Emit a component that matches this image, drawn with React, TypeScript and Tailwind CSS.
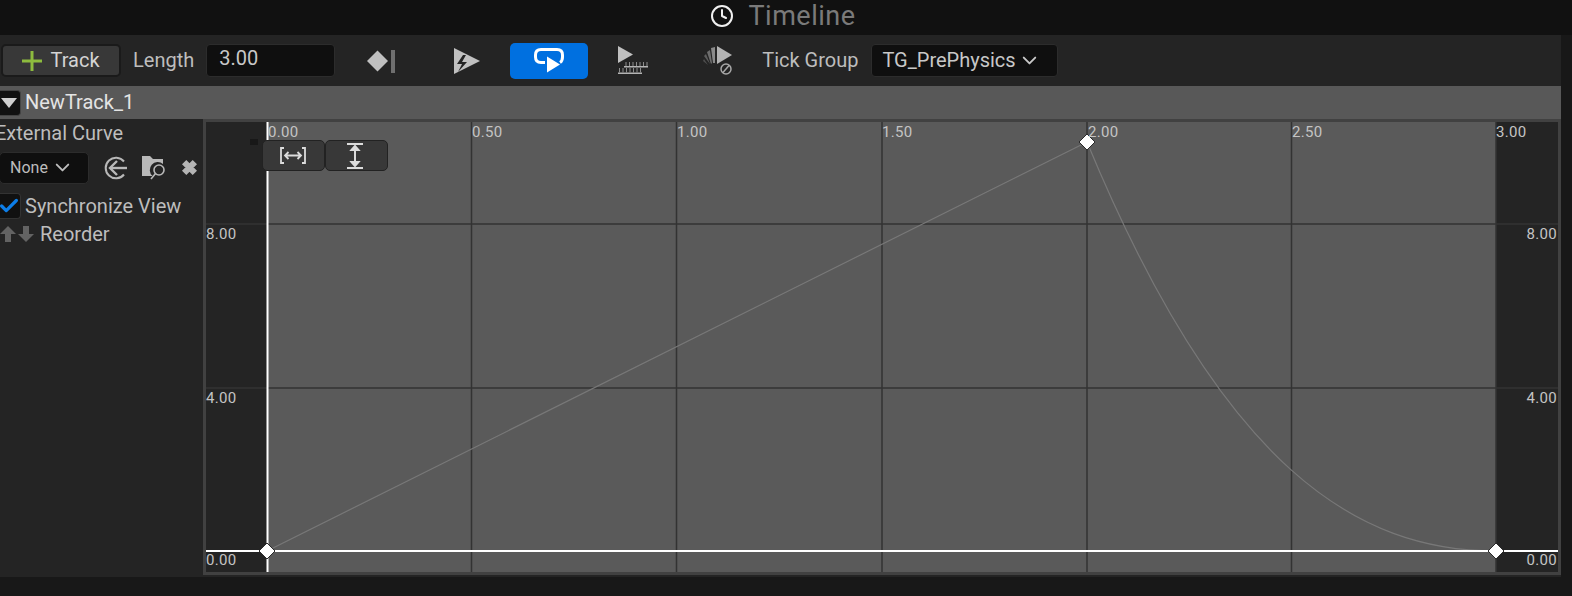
import { Check, ChevronDown, Clock } from "lucide-react";

const xLabels = [
  { text: "0.00", cls: "left-[62px]" },
  { text: "0.50", cls: "left-[266px]" },
  { text: "1.00", cls: "left-[471px]" },
  { text: "1.50", cls: "left-[676px]" },
  { text: "2.00", cls: "left-[882px]" },
  { text: "2.50", cls: "left-[1086px]" },
  { text: "3.00", cls: "left-[1290px]" },
];

const yLabels = [
  { text: "8.00", cls: "top-[103px]" },
  { text: "4.00", cls: "top-[267px]" },
  { text: "0.00", cls: "top-[429px]" },
];

function CurveLines() {
  // chart origin is 206,122 in the page
  return (
    <svg className="absolute inset-0" width="1352" height="450" viewBox="0 0 1352 450">
      <rect x="0" y="0" width="61" height="450" fill="#242424" />
      <rect x="1290" y="0" width="62" height="450" fill="#242424" />
      <g stroke="#333333" strokeWidth="1.5">
        <line x1="265.5" y1="0" x2="265.5" y2="450" />
        <line x1="470.5" y1="0" x2="470.5" y2="450" />
        <line x1="676" y1="0" x2="676" y2="450" />
        <line x1="881" y1="0" x2="881" y2="450" />
        <line x1="1085.5" y1="0" x2="1085.5" y2="450" />
        <line x1="1290" y1="0" x2="1290" y2="450" />
        <line x1="0" y1="102" x2="1352" y2="102" />
        <line x1="0" y1="266" x2="1352" y2="266" />
      </g>
      <path d="M61 429 L881 20 C 1017 349 1153 429 1290 429" fill="none" stroke="#787878" strokeWidth="1.2" />
      <line x1="61.5" y1="0" x2="61.5" y2="450" stroke="#ffffff" strokeWidth="2" />
      <line x1="0" y1="429" x2="1352" y2="429" stroke="#ffffff" strokeWidth="2" />
      <g fill="#ffffff" stroke="#2a2a2a" strokeWidth="1">
        <path d="M61 421 L69 429 L61 437 L53 429 Z" />
        <path d="M881 12 L889 20 L881 28 L873 20 Z" />
        <path d="M1290 421 L1298 429 L1290 437 L1282 429 Z" />
      </g>
      <rect x="44" y="17" width="8" height="6" fill="#181818" />
    </svg>
  );
}

function KeyIcon() {
  return (
    <svg width="30" height="26" viewBox="0 0 30 26">
      <path d="M1 13 L11.5 2.5 L22 13 L11.5 23.5 Z" fill="#c0c0c0" />
      <rect x="25" y="2" width="4" height="23" fill="#6f6f6f" />
    </svg>
  );
}

function AutoPlayIcon() {
  return (
    <svg width="28" height="28" viewBox="0 0 28 28">
      <path d="M1 1 L27 14 L1 27 Z" fill="#c0c0c0" />
      <path d="M10 8 L4 17 L9 17 L5 25 L14 15 L9 15 L13 8 Z" fill="#242424" />
    </svg>
  );
}

function LoopIcon() {
  return (
    <svg width="30" height="25" viewBox="0 0 30 25">
      <path
        d="M11 14.5 H7 Q1.5 14.5 1.5 9 V7 Q1.5 1.5 7 1.5 H23 Q28.5 1.5 28.5 7 V9 Q28.5 13 26 14.5"
        fill="none"
        stroke="#ffffff"
        strokeWidth="3"
      />
      <path d="M13 8.5 L26 16.5 L13 24.5 Z" fill="#ffffff" />
    </svg>
  );
}

function UseLastKeyIcon() {
  return (
    <svg width="31" height="29" viewBox="0 0 31 29">
      <path d="M0 0 L15 8.5 L0 17 Z" fill="#c0c0c0" />
      <rect x="6" y="20" width="24" height="1.5" fill="#b4b4b4" />
      <rect x="0" y="26.5" width="24" height="1.5" fill="#b4b4b4" />
      <g stroke="#8c8c8c" strokeWidth="1">
        <path d="M8 16 V20 M11.5 16 V20 M15 16 V20 M18.5 16 V20 M22 16 V20 M25.5 16 V20 M29 16 V20" />
        <path d="M1.5 22 V26.5 M5 22 V26.5 M8.5 22 V26.5 M12 22 V26.5 M15.5 22 V26.5 M19 22 V26.5 M22.5 22 V26.5" />
      </g>
    </svg>
  );
}

function ReplicatedIcon() {
  return (
    <svg width="32" height="32" viewBox="0 0 32 32">
      <path d="M15 1 L30 10 L15 19 Z" fill="#b4b4b4" />
      <path d="M9 3 L13 2 L13 18 L11 18 Z" fill="#8a8a8a" />
      <path d="M5 7 L8 5 L10 18 L9 19 Z" fill="#6e6e6e" />
      <path d="M2 11 L4 9 L8 19 Z" fill="#5e5e5e" />
      <path d="M1 16 L2 14 L6 20 Z" fill="#4e4e4e" />
      <circle cx="24" cy="24" r="5" fill="none" stroke="#a8a8a8" strokeWidth="1.5" />
      <line x1="21" y1="27.5" x2="27" y2="20.5" stroke="#a8a8a8" strokeWidth="1.5" />
    </svg>
  );
}

function BackArrowIcon() {
  return (
    <svg width="24" height="24" viewBox="0 0 24 24" fill="none" stroke="#b8b8b8" strokeWidth="2">
      <path d="M20 5.5 A10.3 10.3 0 1 0 20 18.5" />
      <path d="M13 5 L6 12 L13 19" strokeWidth="2.4" />
      <path d="M6 12 H23" strokeWidth="2.4" />
    </svg>
  );
}

function BrowseIcon() {
  return (
    <svg width="25" height="25" viewBox="0 0 25 25">
      <path d="M0 1 H8 L11 4 H21 V9 A7.5 7.5 0 0 0 10.5 21 H0 Z" fill="#b8b8b8" />
      <circle cx="17" cy="15" r="5" fill="none" stroke="#b8b8b8" strokeWidth="1.6" />
      <line x1="13.5" y1="18.5" x2="9" y2="24" stroke="#b8b8b8" strokeWidth="1.6" />
    </svg>
  );
}

function ClearIcon() {
  return (
    <svg width="17" height="17" viewBox="0 0 16 16">
      <path d="M2 5 L5 2 L8 5 L11 2 L14 5 L11 8 L14 11 L11 14 L8 11 L5 14 L2 11 L5 8 Z" fill="#b4b4b4" stroke="#b4b4b4" strokeWidth="1.5" />
    </svg>
  );
}

function FitHorizontalIcon() {
  return (
    <svg width="26" height="17" viewBox="0 0 26 17" fill="none" stroke="#dcdcdc" strokeWidth="1.8">
      <path d="M4 1 H1 V16 H4 M22 1 H25 V16 H22" />
      <path d="M5 8.5 H21 M8.5 5 L5 8.5 L8.5 12 M17.5 5 L21 8.5 L17.5 12" />
    </svg>
  );
}

function FitVerticalIcon() {
  return (
    <svg width="20" height="26" viewBox="0 0 20 26" fill="none" stroke="#dcdcdc" strokeWidth="2">
      <path d="M2 1 H18 M2 25 H18" />
      <path d="M10 3 V23" />
      <path d="M6.5 7 L10 3 L13.5 7 Z M6.5 19 L10 23 L13.5 19 Z" fill="#dcdcdc" />
    </svg>
  );
}

function ArrowIcon({ down }: { down?: boolean }) {
  return (
    <svg width="18" height="18" viewBox="0 0 18 18" className={down ? "rotate-180" : ""}>
      <path d="M9 1 L17 9 L12 9 L12 17 L6 17 L6 9 L1 9 Z" fill="#636363" />
    </svg>
  );
}

export default function App() {
  return (
    <div className="w-[1572px] h-[596px] bg-[#181818] overflow-hidden flex flex-col font-['Roboto',sans-serif]">
      <div className="h-[35px] shrink-0 bg-[#111111] flex items-center justify-center gap-[14px] pr-[6px] pb-[3px]">
        <Clock size={24} color="#f0f0f0" strokeWidth={2} />
        <span className="text-[27px] leading-none text-[#7a7a7a] tracking-[0.5px]">Timeline</span>
      </div>

      <div className="w-[1561px] flex flex-col">
        <div className="h-[51px] shrink-0 bg-[#242424] flex items-center text-[20px] text-[#bdbdbd]">
          <button className="ml-[1px] w-[120px] h-[33px] rounded-[5px] bg-[#383838] border-2 border-[#1a1a1a] flex items-center justify-center gap-[8px] pb-[2px] text-[#d4d4d4]">
            <svg width="20" height="20" viewBox="0 0 20 20" className="mt-[2px]">
              <path d="M8.5 0 H11.5 V8.5 H20 V11.5 H11.5 V20 H8.5 V11.5 H0 V8.5 H8.5 Z" fill="#8dbb3e" />
            </svg>
            Track
          </button>
          <span className="ml-[12px] pb-[2px]">Length</span>
          <div className="ml-[12px] w-[129px] h-[33px] rounded-[4px] bg-[#0f0f0f] border border-[#2c2c2c] px-[12px] text-[#c8c8c8] leading-[27px]">
            3.00
          </div>
          <div className="ml-[31px] flex items-center">
            <KeyIcon />
          </div>
          <div className="ml-[57px] flex items-center">
            <AutoPlayIcon />
          </div>
          <button className="ml-[29px] w-[78px] h-[36px] rounded-[5px] bg-[#0070e0] flex items-center justify-center">
            <LoopIcon />
          </button>
          <div className="ml-[30px] flex items-center">
            <UseLastKeyIcon />
          </div>
          <div className="ml-[53px] flex items-center">
            <ReplicatedIcon />
          </div>
          <span className="ml-[28px] pb-[2px]">Tick Group</span>
          <div className="ml-[13px] w-[187px] h-[33px] rounded-[4px] bg-[#0f0f0f] border border-[#2c2c2c] flex items-center pl-[10px] gap-[2px] pb-[1px] text-[#c8c8c8]">
            TG_PrePhysics
            <ChevronDown size={23} color="#c8c8c8" strokeWidth={2} />
          </div>
        </div>

        <div className="h-[33px] shrink-0 bg-[#585858] flex items-center text-[20px] text-[#e4e4e4]">
          <div className="w-[21px] h-[26px] rounded-r-[4px] bg-[#111111] border-r border-y border-[#444444] flex items-center justify-center">
            <svg width="16" height="10" viewBox="0 0 16 10" className="-ml-[3px]">
              <path d="M0 0 H16 L8 10 Z" fill="#d0d0d0" />
            </svg>
          </div>
          <span className="ml-[4px] pb-[2px]">NewTrack_1</span>
        </div>

        <div className="h-[458px] shrink-0 flex items-start bg-[#242424]">
          <div className="w-[203px] shrink-0 flex flex-col text-[20px] text-[#bdbdbd]">
            <div className="h-[24px] leading-[24px] -ml-[5px] mt-[2px] whitespace-nowrap">External Curve</div>
            <div className="flex items-center mt-[6px] h-[33px]">
              <div className="-ml-[1px] w-[90px] h-[32px] rounded-[5px] bg-[#0f0f0f] border border-[#2c2c2c] flex items-center pl-[10px] gap-[3px] text-[16px]">
                None
                <ChevronDown size={23} color="#bdbdbd" strokeWidth={2} />
              </div>
              <div className="ml-[15px] flex items-center">
                <BackArrowIcon />
              </div>
              <div className="ml-[14px] flex items-center">
                <BrowseIcon />
              </div>
              <div className="ml-[14px] flex items-center">
                <ClearIcon />
              </div>
            </div>
            <div className="flex items-center mt-[7px] h-[30px]">
              <div className="w-[21px] h-[26px] rounded-r-[4px] bg-[#111111] border-r border-y border-[#333333] flex items-center justify-center">
                <Check size={22} color="#0d7ee8" strokeWidth={3.5} className="-ml-[3px]" />
              </div>
              <span className="ml-[4px] whitespace-nowrap">Synchronize View</span>
            </div>
            <div className="flex items-center h-[26px]">
              <div className="-ml-[1px] flex">
                <ArrowIcon />
                <ArrowIcon down />
              </div>
              <span className="ml-[5px]">Reorder</span>
            </div>
          </div>

          <div className="w-[1358px] h-[456px] shrink-0 border-[3px] border-[#414141]">
            <div className="relative w-[1352px] h-[450px] bg-[#5a5a5a]">
              <CurveLines />
              {xLabels.map((l) => (
                <span key={l.text} className={`absolute top-[1px] text-[15px] leading-[18px] tracking-[0.3px] text-[#c4c4c4] ${l.cls}`}>
                  {l.text}
                </span>
              ))}
              {yLabels.map((l) => (
                <span key={l.text} className={`absolute left-0 text-[15px] leading-[18px] tracking-[0.3px] text-[#c4c4c4] ${l.cls}`}>
                  {l.text}
                </span>
              ))}
              {yLabels.map((l) => (
                <span key={l.text} className={`absolute right-[1px] text-[15px] leading-[18px] tracking-[0.3px] text-[#c4c4c4] ${l.cls}`}>
                  {l.text}
                </span>
              ))}
              <div className="absolute left-[56px] top-[18px] flex">
                <button className="w-[63px] h-[31px] rounded-[5px] bg-[#383838] border border-[#222222] flex items-center justify-center pr-[2px]">
                  <FitHorizontalIcon />
                </button>
                <button className="w-[63px] h-[31px] rounded-[5px] bg-[#383838] border border-[#222222] flex items-center justify-center pr-[3px]">
                  <FitVerticalIcon />
                </button>
              </div>
            </div>
          </div>
        </div>
      </div>
    </div>
  );
}
